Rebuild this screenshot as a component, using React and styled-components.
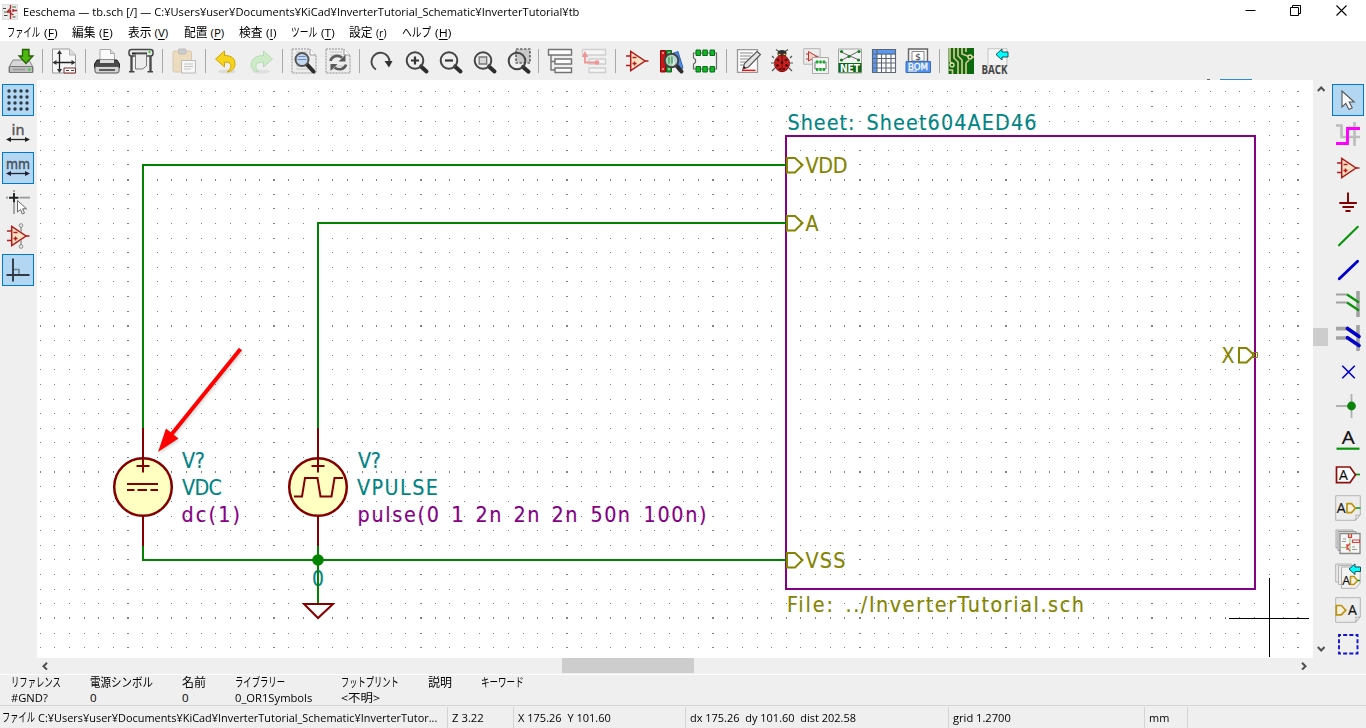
import React, { useLayoutEffect, useRef } from "react";
import styled, { createGlobalStyle, css } from "styled-components";

const Global = createGlobalStyle`
  * { box-sizing: border-box; }
  html, body { margin: 0; padding: 0; overflow: hidden; background: #efefef; }
  body { font-family: "Open Sans", "Noto Sans CJK JP", sans-serif; font-size: 11.5px; color: #000; }
`;

const Window = styled.div`
  width: 1366px;
  height: 728px;
  display: flex;
  flex-direction: column;
  background: #efefef;
  overflow: hidden;
`;

const TitleBar = styled.header`
  height: 23px;
  flex: none;
  display: flex;
  align-items: center;
  background: #fff;
  padding: 0 2px;
`;
const Title = styled.div`
  margin-left: 5px;
  flex: 1;
  line-height: 23px;
`;
const Controls = styled.div`
  display: flex;
  align-items: flex-start;
  height: 23px;
  padding-top: 5px;
`;
const Control = styled.div`
  width: 45.5px;
  display: flex;
  justify-content: center;
`;

const MenuBar = styled.nav`
  height: 18px;
  flex: none;
  display: flex;
  background: #fff;
  padding-left: 7px;
  line-height: 19px;
  u { text-underline-offset: 1.5px; }
`;
const MenuItem = styled.div`
  width: ${(p) => p.$slot}px;
  flex: none;
  display: flex;
  gap: 3.5px;
`;

const ToolBar = styled.div`
  position: relative;
  height: 39px;
  flex: none;
  display: flex;
  align-items: center;
  padding: 1px 0 0 4px;
  &::before {
    content: "";
    position: absolute;
    left: 1220px;
    bottom: 0;
    width: 32px;
    height: 1px;
    background: #2b8bdc;
  }
  &::after {
    content: "";
    position: absolute;
    left: 1207px;
    bottom: 0;
    width: 3px;
    height: 1px;
    background: #666;
  }
`;
const TopButton = styled.div`
  width: 34px;
  height: 34px;
  display: flex;
  align-items: center;
  justify-content: center;
  flex: none;
`;
const Separator = styled.i`
  width: 1px;
  height: 24px;
  margin: 0 4px;
  background: #a8a8a8;
  flex: none;
`;

const Middle = styled.div`
  height: 594px;
  flex: none;
  display: flex;
`;
const SideBar = styled.aside`
  width: 37px;
  flex: none;
  display: flex;
  flex-direction: column;
  align-items: center;
  gap: 2px;
  padding: 4px ${(p) => (p.$right ? "2px 0 3px" : "3px 0 2px")};
`;
const SideButton = styled.div`
  width: 32px;
  height: 32px;
  flex: none;
  display: flex;
  align-items: center;
  justify-content: center;
  ${(p) =>
    p.$on &&
    css`
      background: #b3d6f3;
      box-shadow: inset 0 0 0 1px #0078d7;
    `}
`;
const Icon26 = styled.svg`
  width: 26px;
  height: 26px;
  display: block;
  overflow: visible;
`;

const Work = styled.div`
  width: 1276px;
  flex: none;
  display: flex;
  flex-direction: column;
`;
const Canvas = styled.svg`
  width: 1276px;
  height: 578px;
  flex: none;
  display: block;
  background: #fff;
`;
const HScroll = styled.div`
  height: 16px;
  display: flex;
  align-items: center;
  padding: 0 5px 0 4px;
  justify-content: space-between;
`;
const HThumb = styled.div`
  width: 132px;
  height: 15px;
  align-self: flex-start;
  background: #cdcdcd;
  margin-right: 93px;
`;
const VScroll = styled.div`
  width: 16px;
  flex: none;
  height: 578px;
  display: flex;
  flex-direction: column;
  align-items: center;
  padding: 5px 1px 5px 0;
`;
const VThumb = styled.div`
  width: 15px;
  height: 18px;
  background: #cdcdcd;
  margin: 235px 0 auto;
`;

const Info = styled.div`
  height: 31px;
  flex: none;
  display: flex;
  padding-left: 11px;
  border-top: 1px solid #fdfdfd;
`;
const InfoColumn = styled.div`
  width: ${(p) => p.$slot}px;
  flex: none;
  line-height: 15px;
`;
const InfoHead = styled.div`
  height: 15px;
  font-size: 12.5px;
`;
const InfoValue = styled.div`
  height: 15px;
`;

const Status = styled.footer`
  height: 23px;
  flex: none;
  display: flex;
  align-items: flex-start;
  border-top: 1px solid #d4d4d4;
`;
const StatusCell = styled.div`
  width: ${(p) => p.$slot}px;
  height: 21px;
  margin-top: 1px;
  flex: none;
  display: flex;
  gap: 3px;
  padding-left: ${(p) => p.$pad || 4}px;
  line-height: 21px;
  border-right: 1px solid #d4d4d4;
`;

const FitBox = styled.span`
  display: inline-block;
  white-space: pre;
  transform-origin: 0 50%;
`;
const FitFrame = styled.span`
  display: block;
  flex: none;
  width: ${(p) => p.$w}px;
  white-space: nowrap;
  ${(p) => p.$kana && "font-size: 12.5px;"}
`;

/* Squeezes a label horizontally so that it fills exactly the given width. */
function Fit({ w, kana, children }) {
  const ref = useRef(null);
  useLayoutEffect(() => {
    const el = ref.current;
    if (el) el.style.transform = `scaleX(${w / el.offsetWidth})`;
  }, [w]);
  return (
    <FitFrame $w={w} $kana={kana}>
      <FitBox ref={ref}>{children}</FitBox>
    </FitFrame>
  );
}

/* ---------- icons ---------- */

const Page = ({ x = 1.5, y = 1, w = 23, h = 24 }) => (
  <g>
    <path d={`M${x} ${y}h${w - 6}l6 6v${h - 6}h${-w}z`} fill="#f8f8f8" stroke="#9a9a9a" />
    <path d={`M${x + w - 6} ${y}v6h6`} fill="#ddd" stroke="#b5b5b5" />
  </g>
);
const Curl = () => (
  <g>
    <path d="M.7.7h24.6v19l-5 5.6H.7z" fill="#ececec" stroke="#b4b4b4" />
    <path d="M25.3 19.7c-2 1-3.500 .5-4.500 .3 .3 1.500 .5 3-.5 5.300z" fill="#fff" stroke="#aaa" />
  </g>
);
const OpAmp = () => (
  <g stroke="#b01c1c" fill="none" strokeWidth="1.5">
    <path d="M2 8h5M2 17.500h5M20 13h4.500" strokeWidth="1.700" />
    <path d="M6.700 3.500v19L21 13z" fill="#fae3c4" />
    <path d="M8.500 9.500h4M8.500 15.500h4M10.500 13.500v4" />
  </g>
);
const Lens = ({ cx = 13, cy = 13, r = 8, ex = 24, ey = 24, fill = "none", s = "#454545" }) => (
  <g>
    <path d={`M${cx + r * 0.72} ${cy + r * 0.72}L${ex} ${ey}`} stroke="#2d2d2d" strokeWidth="4" strokeLinecap="round" />
    <circle cx={cx} cy={cy} r={r} fill={fill} stroke={s} strokeWidth="2" />
  </g>
);
const Hatch = () => (
  <g>
    <path d="M1 1h18l6 6v18H1z" fill="#ededed" stroke="#8f8f8f" strokeDasharray="2 1" />
    <path d="M19 1v6h6" fill="#fff" stroke="#999" />
    <path d="M5 4h12M5 7h12M5 18h14M5 21h14" stroke="#c4c4c4" />
  </g>
);
const ICONS = {
  save: (
    <g>
      <path d="M5 12h16l4 7v5.500H1V19z" fill="#d8d8d8" stroke="#858585" />
      <path d="M1.500 18.500h23v6h-23z" fill="#bdbdbd" stroke="#777" />
      <path d="M5 21.500h12" stroke="#999" strokeWidth="1.500" />
      <path d="M20 21.500h2.500" stroke="#2fd02f" strokeWidth="2" />
      <path d="M14.500 1.500h6.500v6.500h4L18 15.500 11 8h3.500z" fill="#4db90e" stroke="#285f08" strokeWidth="1.300" />
    </g>
  ),
  pageset: (
    <g>
      <Page />
      <path d="M8.500 4v19M3 14.500h20" stroke="#222" strokeWidth="1.300" />
      <path d="M8.500 2l-2.500 4h5zM8.500 25l-2.500-4h5zM1.500 14.500l4-2.500v5zM24.500 14.500l-4-2.500v5z" fill="#333" />
      <path d="M13 20h11.500v5H13zM15 22.500h3M20 22.500h3" fill="#fff" stroke="#7b2a2a" />
    </g>
  ),
  print: (
    <g>
      <path d="M6 1.500h10.500l4 4V14H6z" fill="#fafafa" stroke="#aaa" />
      <path d="M16.500 1.500v4h4" fill="#ddd" stroke="#aaa" />
      <path d="M3 12h20l2.500 4v4H.5v-4z" fill="#4b4b4b" stroke="#222" />
      <path d="M6 12h14v3H6z" fill="#ddd" />
      <path d="M1 18.500h24v4.500q0 2-2 2H3q-2 0-2-2z" fill="#d5d5d5" stroke="#555" />
      <path d="M5 22h16" stroke="#333" strokeWidth="1.500" />
    </g>
  ),
  plot: (
    <g>
      <path d="M3.500 7v16M22.500 7v16" stroke="#4c4c4c" strokeWidth="2.400" />
      <path d="M1 23.700h5.500M19.500 23.700H25" stroke="#444" strokeWidth="1.500" />
      <rect x="1" y="1.500" width="24" height="6.500" rx="2.500" fill="#e8e8e8" stroke="#474747" strokeWidth="1.500" />
      <path d="M4 5.500h15" stroke="#222" strokeWidth="2" />
      <path d="M20.500 4h2" stroke="#3cc53c" strokeWidth="2.200" />
      <path d="M7.500 6h11v12l-4 3h-7z" fill="#ececec" stroke="#777" />
    </g>
  ),
  paste: (
    <g opacity=".5">
      <rect x="2" y="3" width="18.500" height="21" rx="1.500" fill="#ecc98f" stroke="#bfa37a" />
      <rect x="7.500" y="1" width="7.500" height="5" rx="1" fill="#aaa" stroke="#888" />
      <path d="M10.500 12.500h14V25h-14z" fill="#fff" stroke="#888" />
      <path d="M13 16h9M13 18.500h9M13 21h7" stroke="#999" />
    </g>
  ),
  undo: (
    <g>
      <ellipse cx="13" cy="23.500" rx="9" ry="2" fill="#dcdcdc" />
      <path d="M1.500 11L10.500 3v4.500c7 0 11 3 10.500 9.500-.5 4-3.500 6.500-8 7 3-2.500 4.500-5 3.500-7.500-.8-2-3-2.500-6-2.300v4.800z" fill="#f6d41c" stroke="#cfa406" />
    </g>
  ),
  redo: (
    <g opacity=".45">
      <ellipse cx="13" cy="23.500" rx="9" ry="2" fill="#d0d0d0" />
      <path d="M24.500 11L15.500 3v4.500c-7 0-12 3-12.500 9.500 0 4 3.500 6.500 8 7-3-2.500-3.500-5-2.500-7.500.8-2 4-2.500 7-2.300v4.800z" fill="#a8e89a" stroke="#74bd74" />
    </g>
  ),
  find: (
    <g>
      <Hatch />
      <Lens cx={11} cy={11.500} r={6.500} ex={22.500} ey={23.500} fill="#c5d8f2" s="#555" />
      <path d="M6.500 11.500h9M7.500 8.500h7" stroke="#6d8bc0" />
    </g>
  ),
  replace: (
    <g>
      <Hatch />
      <path d="M5.500 13c.5-4 6-7 11.500-3.500M21 16.500c-1 4.500-7 6.500-11.500 3" fill="none" stroke="#5a5a5a" strokeWidth="2.600" />
      <path d="M20.500 6.500v7h-7zM5.500 23V16h7z" fill="#5a5a5a" />
    </g>
  ),
  redraw: (
    <g>
      <path d="M8 21.500A9 9 0 1 1 21.500 14" fill="none" stroke="#454545" strokeWidth="1.900" />
      <path d="M16.500 13h8l-3.500 6.500z" fill="#333" />
    </g>
  ),
  zin: (
    <g>
      <Lens cx={13} cy={12.500} r={8.300} ex={24.500} ey={23.500} />
      <path d="M9 12.500h8M13 8.500v8" stroke="#333" strokeWidth="2.200" />
    </g>
  ),
  zout: (
    <g>
      <Lens cx={13} cy={12.500} r={8.300} ex={24.500} ey={23.500} />
      <path d="M9 12.500h8" stroke="#333" strokeWidth="2.200" />
    </g>
  ),
  zfit: (
    <g>
      <Lens cx={13} cy={12.500} r={8.300} ex={24.500} ey={23.500} />
      <path d="M9.200 9h7.500v7H9.200z" fill="#d8d8d8" stroke="#777" strokeWidth="1.300" />
    </g>
  ),
  zsel: (
    <g>
      <path d="M12 1h14v14H12z" fill="#c8c8c8" stroke="#333" strokeDasharray="2.500 1.500" strokeWidth="1.200" />
      <Lens cx={13} cy={13} r={8.300} ex={24.500} ey={23.700} />
    </g>
  ),
  tree: (
    <g fill="#fdfdfd" stroke="#737373" strokeWidth="1.400">
      <path d="M4 7v15h4M4 13.500h4" fill="none" />
      <path d="M1.500 1.500h23V7h-23zM8 11h16.500v5H8zM8 20h16.500v4.500H8z" />
    </g>
  ),
  up: (
    <g>
      <g fill="#f5f5f5" stroke="#cfcfcf" strokeWidth="1.300">
        <path d="M1.500 1.500h23V7h-23zM8 11h16.500v5H8zM8 20h16.500v4.500H8z" />
      </g>
      <path d="M4 7v7.500h12" fill="none" stroke="#ef9595" strokeWidth="1.800" />
      <path d="M4 3L.8 9h6.400z" fill="#ef9595" />
      <circle cx="16" cy="14.500" r="2.300" fill="#ef9595" />
    </g>
  ),
  opamp: <OpAmp />,
  library: (
    <g>
      <path d="M2.500 2.500h5V24h-5z" fill="#d11414" stroke="#850c0c" />
      <path d="M8.500 2.500h5V24h-5z" fill="#1f9e33" stroke="#0e6a1d" />
      <path d="M14.500 5.500l5.500-2L25 20l-4.500 3z" fill="#4f8de6" stroke="#2c65bd" />
      <path d="M4 5h2M10 5h2M4 21h2M10 21h2" stroke="#fff" />
      <Lens cx={13.500} cy={12.500} r={6.800} ex={23.500} ey={23.500} fill="rgba(205,232,220,.8)" s="#444" />
      <path d="M11 9v6.500M14 8.500v7" stroke="#4c9e62" strokeWidth="1.500" />
    </g>
  ),
  footprint: (
    <g>
      <path d="M1.500 5h23v16h-23v-5l2-1.500v-3L1.500 10z" fill="#f4f4f4" stroke="#666" strokeWidth="1.200" />
      <g fill="#10b828" stroke="#0a6b17">
        <path d="M4 2h4.500v5.500H4zM10.800 2h4.500v5.500h-4.500zM18 2h4.500v5.500H18zM4 18.500h4.500V24H4zM10.800 18.500h4.500V24h-4.500zM18 18.500h4.500V24H18z" />
      </g>
    </g>
  ),
  annotate: (
    <g>
      <path d="M2.500 1.700h20v22.600h-20z" fill="#fcfcfc" stroke="#999" strokeWidth="1.300" />
      <path d="M5 5h13M5 8h11M5 11h9M5 14h6M5 17h4" stroke="#888" />
      <path d="M8 21l1.500-5.500L22 3.500l3.500 3L13.500 19z" fill="#e4e4e4" stroke="#555" strokeWidth="1.100" />
      <path d="M8 21l1-3 2 2z" fill="#222" />
      <path d="M7 22.300h13.500" stroke="#f00" strokeWidth="1.300" />
    </g>
  ),
  bug: (
    <g>
      <path d="M5 10L3 8M5 15H2M6 20l-3 3M21 10l2-2M21 15h3M20 20l3 3M10.500 4L7 1.500M15.500 4L19 1.500" stroke="#555" strokeWidth="1.200" />
      <ellipse cx="13" cy="5.500" rx="4.500" ry="3.500" fill="#303030" />
      <path d="M9.500 6.500h2M14.500 6.500h2" stroke="#efd243" strokeWidth="1.500" />
      <ellipse cx="13" cy="15.500" rx="7.500" ry="8.200" fill="#d01d1d" stroke="#7d1515" />
      <path d="M13 8v16" stroke="#3a0808" strokeWidth=".7" />
      <g fill="#2a0606">
        <circle cx="9" cy="12" r="1.300" /><circle cx="17" cy="12" r="1.300" />
        <circle cx="8.500" cy="17.500" r="1.300" /><circle cx="17.500" cy="17.500" r="1.300" />
        <circle cx="13" cy="14.500" r="1.300" /><circle cx="11" cy="21" r="1" /><circle cx="15" cy="21" r="1" />
      </g>
    </g>
  ),
  assoc: (
    <g>
      <path d="M.7.7h16.500v15.500H.7z" fill="#ececec" stroke="#b4b4b4" />
      <path d="M5.500 3.500v9.500l8-4.700zM3 6h2.500M3 11h2.500M13 8.300h2.500" fill="#f6d3c0" stroke="#b33" />
      <path d="M9.500 9.500h16v16h-16z" fill="#f3f3f3" stroke="#aaa" />
      <path d="M12 14h11v7H12z" fill="#fff" stroke="#777" />
      <path d="M13 14h2.200M16.400 14h2.200M19.800 14H22M13 21.500h2.200M16.400 21.500h2.200M19.800 21.500H22" stroke="#14ae2c" strokeWidth="2.800" />
    </g>
  ),
  net: (
    <g>
      <path d="M1.500 1h23v24h-23z" fill="#f2f2f2" stroke="#a5a5a5" />
      <path d="M4 4l18 8M22 3L5 12" stroke="#666" />
      <g fill="#1a7a22"><circle cx="4.500" cy="3.500" r="1.600" /><circle cx="22" cy="3.500" r="1.600" /><circle cx="4.500" cy="12" r="1.600" /><circle cx="21.500" cy="12" r="1.600" /><circle cx="12" cy="8.500" r="1.600" /></g>
      <path d="M1.500 15h23v9.500h-23z" fill="#0d6618" />
      <text x="3" y="23.700" textLength="20" lengthAdjust="spacingAndGlyphs" fontSize="11" fontWeight="700" fontFamily="DejaVu Sans" fill="#fff">NET</text>
    </g>
  ),
  table: (
    <g>
      <path d="M1.500 1.500h23v23h-23z" fill="#fff" />
      <path d="M1.500 1.500h23v5h-23zM1.500 1.500H6v23H1.500z" fill="#5b98f0" />
      <path d="M1.500 1.500h23v23h-23zM6 1.500v23M10.500 6v18.500M15 6v18.500M20 6v18.500M1.500 6h23M1.500 10.500h23M1.500 15h23M1.500 20h23" fill="none" stroke="#5d6674" strokeWidth="1.100" />
    </g>
  ),
  bom: (
    <g>
      <path d="M3.500 1h19v15h-19z" fill="#f4f4f4" stroke="#666" strokeWidth="1.400" />
      <path d="M7 3.500h12v9.500H7z" fill="#fff" stroke="#888" />
      <text x="10" y="12" fontSize="9.500" fontFamily="DejaVu Sans" fill="#333">$</text>
      <path d="M1 13.500h24.500v11H1z" fill="#5290ee" stroke="#3c6eb8" />
      <text x="3" y="21.500" textLength="20" lengthAdjust="spacingAndGlyphs" fontSize="8.500" fontFamily="DejaVu Sans" fill="#fff" stroke="#fff" strokeWidth=".3">BOM</text>
      <path d="M3 23h9" stroke="#fff" />
    </g>
  ),
  pcb: (
    <g fill="none">
      <path d="M.5 0h25.500v26H.5z" fill="#0b6a10" />
      <path d="M2 0v13.500l2 2M6 0v10l4 4v12M10 0v8l4 4v14M14 0v6l8 3h4M18 0v4M18 26V15l3-3M.5 22h4v4" stroke="#d9c58b" strokeWidth="1.700" />
      <circle cx="22" cy="9" r="2" stroke="#eee0b0" strokeWidth="1.300" fill="#0b6a10" />
      <circle cx="4" cy="17" r="2" stroke="#eee0b0" strokeWidth="1.300" fill="#0b6a10" />
    </g>
  ),
  back: (
    <g>
      <path d="M6 .7h19v17H6z" fill="#f5f5f5" stroke="#c4c4c4" />
      <path d="M14 6.500L20 1v3h6v5h-6v3z" fill="#0ff" stroke="#174e55" />
      <text x="-.5" y="26" textLength="26" lengthAdjust="spacingAndGlyphs" fontSize="11.500" fontWeight="700" fontFamily="Open Sans" fill="#444">BACK</text>
    </g>
  ),
  dots: (
    <g fill="#2c3a48">
      {[4, 10, 16, 22].flatMap((x) => [4, 10, 16, 22].map((y) => <circle key={x + "-" + y} cx={x} cy={y} r="1.700" />))}
    </g>
  ),
  inch: (
    <g>
      <text x="6.500" y="14" textLength="13" lengthAdjust="spacingAndGlyphs" fontSize="14.500" fontFamily="DejaVu Sans" fill="#555" stroke="#555" strokeWidth=".4">in</text>
      <path d="M3 18.500h20" stroke="#222" strokeWidth="1.300" />
      <path d="M1 18.500l5-2.500v5zM25 18.500l-5-2.500v5z" fill="#222" />
    </g>
  ),
  mm: (
    <g>
      <text x="1" y="14" textLength="24" lengthAdjust="spacingAndGlyphs" fontSize="14.500" fontFamily="DejaVu Sans" fill="#444c55" stroke="#444c55" strokeWidth=".4">mm</text>
      <path d="M3 18.500h20" stroke="#223" strokeWidth="1.300" />
      <path d="M1 18.500l5-2.500v5zM25 18.500l-5-2.500v5z" fill="#223" />
    </g>
  ),
  cursor: (
    <g>
      <path d="M1 8.700h2M9 1v2M14.500 8.700H25M9 14v11" stroke="#999" strokeWidth="1.700" />
      <path d="M4 8.700h9.500M9 4v9.500" stroke="#222" strokeWidth="1.900" />
      <path d="M12.500 11.500v11.500l3-2.500 1.800 4.500 2.200-1-2-4.200h4z" fill="#fff" stroke="#666" />
    </g>
  ),
  pins: (
    <g>
      <OpAmp />
      <path d="M16 3v6M16 17v6" stroke="#999" strokeWidth="1.500" />
      <circle cx="16" cy="2.500" r="1.800" fill="#eee" stroke="#888" />
      <circle cx="16" cy="23.500" r="1.800" fill="#eee" stroke="#888" />
    </g>
  ),
  angle: (
    <g fill="none">
      <path d="M8 12.500h6V18" stroke="#6f7f8e" strokeWidth="1.500" />
      <path d="M8 1.500v23M1.500 18h23" stroke="#2f3a44" strokeWidth="1.900" />
    </g>
  ),
  arrow: <path d="M7 4v16l3.800-3.600 3.200 6 3.200-1.600-3-5.800h5z" fill="#fbfbfb" stroke="#555" strokeWidth="1.100" />,
  highlight: (
    <g fill="none">
      <path d="M1 4.500h5.500V16H25M19.500 1v24" stroke="#bdbdbd" strokeWidth="2.700" />
      <path d="M1 22.500h11.500v-15H25" stroke="#f0f" strokeWidth="2.900" />
    </g>
  ),
  gnd: <path d="M13 3.500V14M4.300 14h17.500M7.500 18h11.500M10.500 22h5" stroke="#800000" strokeWidth="1.900" />,
  wire: <path d="M4 22.300L22.800 3.800" stroke="#0a940a" strokeWidth="2.100" strokeLinecap="round" />,
  bus: <path d="M4.300 21.700L22.600 4.300" stroke="#0000c8" strokeWidth="2.900" strokeLinecap="round" />,
  wireEntry: (
    <g>
      <path d="M1 3.500h11.500M1 11.500h11.500" stroke="#a3a3a3" strokeWidth="2.200" />
      <path d="M23 0v26" stroke="#a3a3a3" strokeWidth="3.600" />
      <path d="M12 3.500L24 11.500M12 11.500L24 19.500" stroke="#0a940a" strokeWidth="2.300" />
    </g>
  ),
  busEntry: (
    <g>
      <path d="M1 3.700h11.500M1 13h11.500" stroke="#a3a3a3" strokeWidth="3.700" />
      <path d="M23 0v26" stroke="#a3a3a3" strokeWidth="3.600" />
      <path d="M12.500 3.500L24 11.500M12.500 12.700L24 20.500" stroke="#0000c8" strokeWidth="3.700" strokeLinecap="round" />
    </g>
  ),
  noconn: <path d="M7.300 6.800L19.800 19.300M19.800 6.800L7.300 19.300" stroke="#0000c8" strokeWidth="1.600" />,
  junction: (
    <g>
      <path d="M16.500 1v24M1 13h16" stroke="#b0b0b0" strokeWidth="1.800" />
      <circle cx="16.500" cy="13" r="4.400" fill="#0a840a" />
    </g>
  ),
  label: (
    <g>
      <text x="6.700" y="16.500" textLength="13" lengthAdjust="spacingAndGlyphs" fontSize="18.500" fontFamily="Open Sans" fill="#111" stroke="#111" strokeWidth=".2">A</text>
      <path d="M1.500 21.700h23" stroke="#0a940a" strokeWidth="2.200" />
    </g>
  ),
  glabel: (
    <g>
      <path d="M20 13.500h5" stroke="#0a940a" strokeWidth="1.700" />
      <path d="M1.500 6h13.500l5.500 7.700-5.500 8H1.500z" fill="#fff" stroke="#8a1010" strokeWidth="1.700" />
      <text x="4" y="18.500" fontSize="14" fontFamily="Open Sans" fill="#111" stroke="#111" strokeWidth=".2">A</text>
    </g>
  ),
  hlabel: (
    <g>
      <Curl />
      <text x="1.800" y="18" fontSize="14" fontFamily="Open Sans" fill="#111" stroke="#111" strokeWidth=".2">A</text>
      <path d="M12 8.700h4.500l4 4.500-4 4.500H12z" fill="#f6f0e0" stroke="#bd9412" strokeWidth="1.700" />
      <path d="M21 13h4.500" stroke="#0a940a" strokeWidth="1.500" />
    </g>
  ),
  sheet: (
    <g>
      <path d="M1 1h17v18H1z" fill="#e2e2e2" stroke="#aaa" />
      <path d="M3 2.500h18v19H3z" fill="#e8e8e8" stroke="#999" />
      <path d="M5 4.500h20v20H5z" fill="#f5f5f5" stroke="#888" strokeWidth="1.300" />
      <path d="M15 4.500v20M6 18.500h5" stroke="#8fca70" />
      <path d="M13.500 5v3.500h3V5M17.500 11h7v2.500h-7zM12 15v6M12 18l3-3.500M12 18l3 4" fill="none" stroke="#d84040" strokeWidth="1.200" />
      <path d="M8 10h3M7 12.500h4M17 18h3M17 20.500h5" stroke="#999" />
    </g>
  ),
  importLabel: (
    <g>
      <path d="M.7 1h16v18h-16z" fill="#ececec" stroke="#b4b4b4" />
      <path d="M3.500 2.500h16v19h-16z" fill="#eee" stroke="#b4b4b4" />
      <path d="M6.500 4h18.700v16l-4.500 5.300H6.500z" fill="#f3f3f3" stroke="#b0b0b0" />
      <text x="7.300" y="21.500" fontSize="12.500" fontFamily="Open Sans" fill="#111" stroke="#111" strokeWidth=".2">A</text>
      <path d="M15.500 13.500h3.500l3.500 4-3.500 4h-3.500z" fill="#f6f0e0" stroke="#bd9412" strokeWidth="1.500" />
      <path d="M22.500 17.500H25" stroke="#0a940a" strokeWidth="1.500" />
      <path d="M14 6L20 1v3h5.500v4.500H20v3z" fill="#0ff" stroke="#174e55" />
    </g>
  ),
  pin: (
    <g>
      <Curl />
      <path d="M1.300 8.500h5l4.500 4.700-4.500 4.700h-5z" fill="#f6f0e0" stroke="#bd9412" strokeWidth="1.700" />
      <text x="13" y="18" fontSize="14" fontFamily="Open Sans" fill="#111" stroke="#111" strokeWidth=".2">A</text>
    </g>
  ),
  select: <path d="M4 4h18.500v18.500H4z" fill="none" stroke="#1414cf" strokeWidth="1.900" strokeDasharray="4 2.170" strokeDashoffset="2" />,
};

const Glyph = ({ name }) => (
  <Icon26 viewBox="0 0 26 26" fill="none">{ICONS[name]}</Icon26>
);

const TOP = [
  "save", "|", "pageset", "|", "print", "plot", "|", "paste", "|", "undo", "redo", "|",
  "find", "replace", "|", "redraw", "zin", "zout", "zfit", "zsel", "|", "tree", "up", "|",
  "opamp", "library", "footprint", "|", "annotate", "bug", "assoc", "net", "table", "bom", "|", "pcb", "back",
];
const LEFT = [["dots", 1], ["inch"], ["mm", 1], ["cursor"], ["pins"], ["angle", 1]];
const RIGHT = [
  ["arrow", 1], ["highlight"], ["opamp"], ["gnd"], ["wire"], ["bus"], ["wireEntry"], ["busEntry"], ["noconn"],
  ["junction"], ["label"], ["glabel"], ["hlabel"], ["sheet"], ["importLabel"], ["pin"], ["select"],
];

/* name, its width, accelerator, its width, distance to the next item */
const MENU = [
  ["ファイル", 33, "F", 14, 65], ["編集", 23.5, "E", 13.5, 55.5], ["表示", 23.500, "V", 14, 56], ["配置", 23.500, "P", 14, 55.5],
  ["検査", 23.500, "I", 10.5, 52], ["ツール", 26.500, "T", 13.5, 58], ["設定", 23.500, "r", 11, 53], ["ヘルプ", 29.500, "H", 16, 60],
];

const INFO = [
  ["リファレンス", 50, "#GND?", 37, 79], ["電源シンボル", 63, "0", 7, 92], ["名前", 24, "0", 7, 53],
  ["ライブラリー", 50, "0_OR1Symbols", 77, 106], ["フットプリント", 58, "<不明>", 39, 87],
  ["説明", 24, "", 0, 52.5], ["キーワード", 43, "", 0, 60],
];

const STATUS = [
  ["C:¥Users¥user¥Documents¥KiCad¥InverterTutorial_Schematic¥InverterTutor...", 399, 448, 2, "ファイル"],
  ["Z 3.22", 31.5, 66, 4], ["X 175.26  Y 101.60", 93, 172, 4], ["dx 175.26  dy 101.60  dist 202.58", 166, 263, 4],
  ["grid 1.2700", 58, 196, 4], ["mm", 20, 43, 4],
];

/* ---------- schematic ---------- */

const STEP = 14.63;
function gridPath() {
  let d = "";
  for (let i = -6; i <= 80; i++) {
    const gx = 128 + i * STEP;
    const boldX = i % 10 === 0;
    const x = boldX ? Math.round(gx) - 1 : Math.floor(gx);
    for (let j = -6; j <= 32; j++) {
      const gy = 179.55 + j * STEP;
      const boldY = j % 10 === 0;
      const y = boldY ? Math.round(gy) - 1 : Math.floor(gy);
      const w = boldX ? 2 : 1;
      const h = boldY ? 2 : 1;
      d += `M${x} ${y}h${w}v${h}h${-w}z`;
    }
  }
  return d;
}
const GRID = gridPath();

const TEAL = "#008484";
const PURPLE = "#840084";
const OLIVE = "#848400";
const MAROON = "#840000";
const GREEN = "#008400";

/* Letters slightly narrowed and set apart, like a plotter font. */
const NARROW = 0.97;
const StrokeText = styled.text`
  font-family: "DejaVu Sans Condensed", "DejaVu Sans", sans-serif;
  font-stretch: condensed;
  font-size: 22px;
  fill: ${(p) => p.$c};
  stroke: ${(p) => p.$c};
  stroke-width: 0.15px;
`;
const LABELS = [
  ["V?", 182, 468, 23, TEAL], ["VDC", 182, 495, 40, TEAL], ["dc(1)", 181.5, 522, 58.500, PURPLE],
  ["V?", 358, 468, 23, TEAL], ["VPULSE", 357, 495, 81, TEAL],
  ["pulse(0", 357.5, 522, 81.500, PURPLE], ["1", 451, 522, 13, PURPLE], ["2n", 475.500, 522, 26, PURPLE],
  ["2n", 513.500, 522, 26, PURPLE], ["2n", 551.500, 522, 26, PURPLE], ["50n", 590.500, 522, 39.500, PURPLE],
  ["100n)", 643.500, 522, 63, PURPLE],
  ["Sheet:", 787.500, 130, 67, TEAL], ["Sheet604AED46", 866.500, 130, 170, TEAL],
  ["VDD", 805.500, 173, 42, OLIVE], ["A", 805.500, 231, 13, OLIVE], ["VSS", 805.500, 568, 40, OLIVE],
  ["X", 1221.500, 363, 13, OLIVE], ["File:", 787, 612, 46, OLIVE], ["../InverterTutorial.sch", 845.500, 612, 238.500, OLIVE],
  ["0", 312, 585.500, 12, TEAL],
];

function Schematic() {
  return (
    <Canvas viewBox="37 80 1276 578" fill="none">
      <path d={GRID} fill="#808080" shapeRendering="crispEdges" />
      <g strokeWidth="2">
        <path d="M786 136H1255V589H786z" stroke={PURPLE} />
        <path d="M143 429V165H786M318 428V223H786M143 545V560H786M318 545V604" stroke={GREEN} />
      </g>
      {[143, 318].map((x) => (
        <g key={x} stroke={MAROON} strokeWidth="2">
          <circle cx={x} cy="487" r="28.800" fill="#ffffc2" strokeWidth="2.500" />
          <path d={`M${x} 428V472.500M${x - 6.5} 466h13M${x} 516V546`} />
        </g>
      ))}
      <path d="M127 484h31M127 490h7.500M137.500 490h9.500M150.500 490h7.500" stroke={MAROON} strokeWidth="2" />
      <path d="M294 496.500h8l3-18.500h12.500l3 18.500h11l3-18.500h8.500" stroke={MAROON} strokeWidth="2" />
      <circle cx="318" cy="560" r="5.800" fill={GREEN} />
      <path d="M304 604h29L318 618z" fill="#fff" stroke={MAROON} strokeWidth="2" />
      {[165, 223, 560].map((y) => (
        <path key={y} d={`M787 ${y - 7}h8l7.500 7-7.500 7.500h-8z`} stroke={OLIVE} strokeWidth="2" />
      ))}
      <path d="M1239 348h7.500l7.500 7-7.500 7.500h-7.500z" stroke={OLIVE} strokeWidth="2" />
      <path d="M1252.500 352.500h5v5h-5z" stroke={OLIVE} />
      {LABELS.map(([t, x, y, w, c], i) => (
        <StrokeText
          key={i}
          x="0"
          y="0"
          transform={`translate(${x} ${y}) scale(${NARROW} 1)`}
          textLength={w / NARROW}
          lengthAdjust={t.length === 1 ? "spacingAndGlyphs" : "spacing"}
          $c={c}
        >
          {t}
        </StrokeText>
      ))}
      <path d="M318 568V588" stroke={GREEN} strokeWidth="2" />
      <path d="M1229 618.500h80M1269.500 578v79" stroke="#000" />
      <g style={{ filter: "drop-shadow(1px 2px 1.500px rgba(0,0,0,.15))" }}>
        <path d="M240.500 349L171 435" stroke="#f00" strokeWidth="4" />
        <path d="M158 452L166 428.500 178.500 438.500z" fill="#f00" />
      </g>
    </Canvas>
  );
}

const Chevron = ({ d, w = 8, h = 8 }) => (
  <svg width={w} height={h} viewBox={`0 0 ${w} ${h}`} fill="none">
    <path d={d} stroke="#505050" strokeWidth="2" />
  </svg>
);

export default function App() {
  return (
    <Window>
      <Global />
      <TitleBar>
        <svg width="16" height="16" viewBox="0 0 16 16" fill="none">
          <path d="M.5.5h15v15H.5z" fill="#ececec" stroke="#ddd" />
          <path d="M1 4.500h3M2 11.500h3.500M10.500 13h3" stroke="#444" strokeWidth="1.200" />
          <path d="M8.500 1v3.500M8.500 11.500V15M5.500 7.500l3-3M4.500 8h4M8.500 6v5.500M8.500 9l3 2M11 6.500h4M11 5v3" stroke="#b02020" strokeWidth="1.300" />
          <path d="M2 8h2.500M10 3h4" stroke="#3d6e3d" />
        </svg>
        <Title>
          <Fit w={556}>Eeschema — tb.sch [/] — C:¥Users¥user¥Documents¥KiCad¥InverterTutorial_Schematic¥InverterTutorial¥tb</Fit>
        </Title>
        <Controls>
          <Control><svg width="11" height="11"><path d="M.5 5.500h10" stroke="#000" /></svg></Control>
          <Control>
            <svg width="11" height="11" fill="none"><path d="M.5 2.500h8v8h-8zM2.500 2.500v-2h8v8h-2" stroke="#000" /></svg>
          </Control>
          <Control><svg width="11" height="11"><path d="M.5.5l10 10M10.500.5l-10 10" stroke="#000" strokeWidth="1.100" /></svg></Control>
        </Controls>
      </TitleBar>
      <MenuBar>
        {MENU.map(([name, w, key, kw, slot]) => (
          <MenuItem key={name} $slot={slot}>
            <Fit w={w} kana>{name}</Fit>
            <Fit w={kw}>(<u>{key}</u>)</Fit>
          </MenuItem>
        ))}
      </MenuBar>
      <ToolBar>
        {TOP.map((name, i) =>
          name === "|" ? <Separator key={i} /> : <TopButton key={i}><Glyph name={name} /></TopButton>
        )}
      </ToolBar>
      <Middle>
        <SideBar>
          {LEFT.map(([name, on]) => <SideButton key={name} $on={!!on}><Glyph name={name} /></SideButton>)}
        </SideBar>
        <Work>
          <Schematic />
          <HScroll>
            <Chevron d="M6 .8L2.500 4.200 6 7.600" />
            <HThumb />
            <Chevron d="M2 .8L5.500 4.200 2 7.600" />
          </HScroll>
        </Work>
        <VScroll>
          <Chevron d="M.8 6L4.200 2.500 7.600 6" />
          <VThumb />
          <Chevron d="M.8 2L4.200 5.500 7.600 2" />
        </VScroll>
        <SideBar $right>
          {RIGHT.map(([name, on]) => <SideButton key={name} $on={!!on}><Glyph name={name} /></SideButton>)}
        </SideBar>
      </Middle>
      <Info>
        {INFO.map(([head, hw, value, vw, slot]) => (
          <InfoColumn key={head} $slot={slot}>
            <InfoHead><Fit w={hw}>{head}</Fit></InfoHead>
            <InfoValue>{value && <Fit w={vw}>{value}</Fit>}</InfoValue>
          </InfoColumn>
        ))}
      </Info>
      <Status>
        {STATUS.map(([text, w, slot, pad, prefix]) => (
          <StatusCell key={text} $slot={slot} $pad={pad}>
            {prefix && <Fit w={33} kana>{prefix}</Fit>}
            <Fit w={w}>{text}</Fit>
          </StatusCell>
        ))}
      </Status>
    </Window>
  );
}
